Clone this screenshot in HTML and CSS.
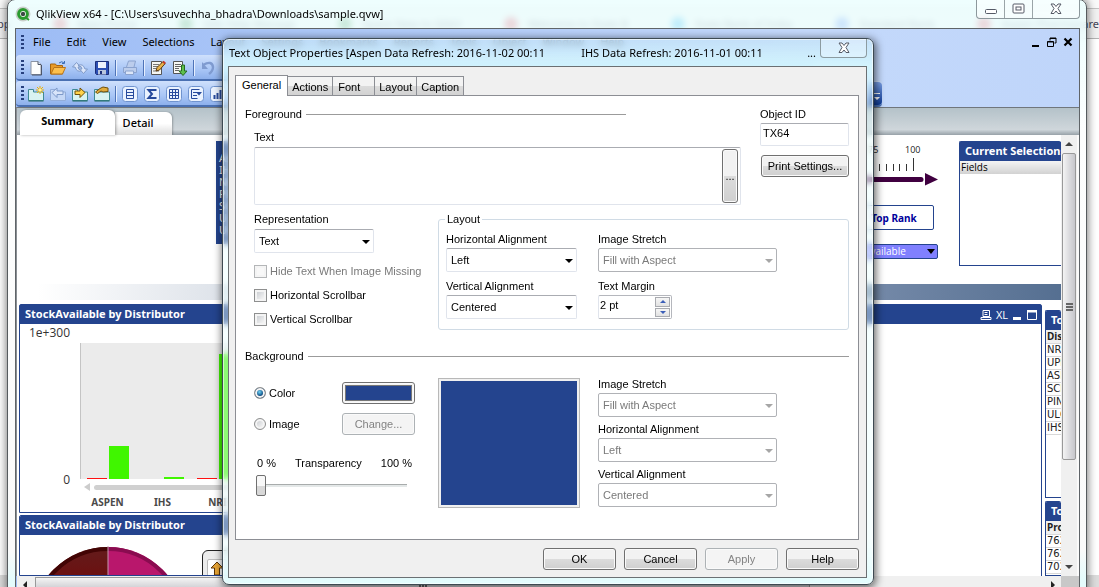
FILE: index.html
```html
<!DOCTYPE html>
<html lang="en">
<head>
<meta charset="utf-8">
<title>QlikView x64</title>
<link rel="stylesheet" href="styles.css">
</head>
<body>
<div class="desktop">
  <div class="browser">
    <div class="browser-top"></div>
    <div class="bookmarks">
      <span class="bm bm-first">pp</span>
      <span class="bm"><i class="dot red"></i>Apps Portal</span>
      <span class="bm"><i class="dot green"></i>Qlik Help Manage</span>
      <span class="bm"><i class="dot green"></i>Space New to QlikV</span>
      <span class="bm"><i class="dot red"></i>Welcome to State B</span>
      <span class="bm"><i class="dot cyan"></i>State Bank of India</span>
      <span class="bm"><i class="dot blue"></i>Standard Bank</span>
      <span class="bm bm-last"><i class="dot red"></i>Aspen Pharmacare</span>
    </div>
    <div class="browser-page"></div>
    <div class="browser-foot"></div>
  </div>

  <main class="window">
    <header class="titlebar">
      <svg class="app-icon" viewBox="0 0 16 16"><circle cx="8" cy="8" r="7.5" fill="#c9cfcb"/><circle cx="8" cy="8" r="4.4" fill="#fff" stroke="#2a9a2e" stroke-width="3"/><circle cx="8" cy="8" r="2.2" fill="#3c4a44"/><path d="M10 11l4 3" stroke="#2a9a2e" stroke-width="2"/></svg>
      <h1 class="title">QlikView x64 - [C:\Users\suvechha_bhadra\Downloads\sample.qvw]</h1>
      <div class="controls">
        <button class="ctl" aria-label="Minimize"><svg width="14" height="12" viewBox="0 0 14 12"><rect x="1.500" y="6.500" width="11" height="4" rx="1" fill="#fff" stroke="#555a66"/></svg></button>
        <button class="ctl" aria-label="Restore"><svg width="13" height="12" viewBox="0 0 13 12"><rect x="1" y="1" width="11" height="9" rx="1" fill="#fff" stroke="#555a66"/><rect x="4" y="4" width="5" height="3" fill="#fff" stroke="#555a66"/></svg></button>
        <button class="ctl ctl-close" aria-label="Close"><svg width="14" height="12" viewBox="0 0 14 12"><path d="M2 1h3l2 2.500L9 1h3L9 5.500 12 10.500H9L7 8 5 10.500H2L5 5.500z" fill="#fff" stroke="#555a66"/></svg></button>
      </div>
    </header>

    <div class="client">
      <nav class="menubar">
        <i class="grip"></i>
        <a href="#">File</a><a href="#">Edit</a><a href="#">View</a><a href="#">Selections</a><a href="#">Layout</a><a href="#">Settings</a><a href="#">Bookmarks</a><a href="#">Reports</a><a href="#">Tools</a><a href="#">Object</a><a href="#">Window</a><a href="#">Help</a>
        <div class="mdi">
          <button aria-label="Minimize document"><svg width="10" height="10" viewBox="0 0 10 10"><path d="M1 8h7v2H1z"/></svg></button>
          <button aria-label="Restore document"><svg width="10" height="10" viewBox="0 0 10 10" fill="none" stroke="#000"><path d="M3 3.500V1h6v5H7.500M3 1.500h6"/><path d="M.5 4.500h6v5h-6zM.5 5h6"/></svg></button>
          <button aria-label="Close document"><svg width="10" height="10" viewBox="0 0 10 10"><path d="M1.500 1.500l7 7M8.500 1.500l-7 7" stroke="#000" stroke-width="2.200"/></svg></button>
        </div>
      </nav>
      <div class="toolbar toolbar-std">
        <i class="grip"></i>
        <button aria-label="New"><svg viewBox="0 0 16 16"><path d="M3 1.500h7l3 3v10H3z" fill="#fdfdfd" stroke="#8b93a3"/><path d="M10 1.500v3h3" fill="#dfe6f2" stroke="#4c5568"/><path d="M13.500 5v10H4" stroke="#4c5568" fill="none"/></svg></button>
        <button aria-label="Open"><svg viewBox="0 0 16 16"><path d="M.5 14V4h5l1 1.500h6V14z" fill="#e89a28" stroke="#a8650c"/><path d="M1 14l3-6.500h11.500L12.500 14z" fill="#fcc04e" stroke="#b8741a"/><path d="M9 3q3-2.500 5 0M14.500 1v2.500H12" fill="none" stroke="#3c6db5"/></svg></button>
        <button aria-label="Reload"><svg viewBox="0 0 16 16" fill="#dbe6fa" stroke="#7f9ac8"><path d="M.5 7L4.500 2.500 8.500 7H6q0 3 4 3.500Q5 13 3 7z"/><path d="M15.500 9l-4 4.500L7.500 9H10q0-3-4-3.500Q11 3 13 9z"/></svg></button>
        <button aria-label="Save"><svg viewBox="0 0 16 16"><path d="M1.500 1.500h13v13h-12l-1-1z" fill="#2c4fb4" stroke="#1c2f78"/><rect x="4" y="2" width="8" height="6" fill="#eef3fd"/><rect x="4" y="10" width="8" height="4.500" fill="#b9c6dd"/><rect x="6" y="11" width="2" height="3" fill="#1c2f78"/></svg></button>
        <i class="sep"></i>
        <button aria-label="Print"><svg viewBox="0 0 16 16" fill="#bccdec" stroke="#8ba3cf"><path d="M4.500 7l2-6h7l-1.500 6"/><path d="M1.500 7.500h13v5h-13z"/><path d="M3.500 11h8v3.500h-8z" fill="#dce6f8"/></svg></button>
        <i class="sep"></i>
        <button aria-label="Edit Script"><svg viewBox="0 0 16 16"><path d="M1.500 1.500h10v13h-10z" fill="#f6f6f2" stroke="#555"/><path d="M3 4.500h6M3 6.500h5M3 8.500h3M3 11h6" stroke="#777"/><path d="M6 11l1-3.500L13 1.500l2.200 2L9.500 10z" fill="#e7b24a" stroke="#5c3a10"/><path d="M13 1.500l2.200 2" stroke="#c43a2a" stroke-width="2"/></svg></button>
        <button aria-label="Export"><svg viewBox="0 0 16 16"><path d="M1.500 1.500h9v12h-9z" fill="#f8f8f4" stroke="#555"/><path d="M3 4.500h6M3 6.500h6M3 8.500h4M3 10.500h4" stroke="#666"/><path d="M9.500 5h3v6H15l-4 4.500L7 11h2.500z" fill="#5fbf4c" stroke="#256b20"/></svg></button>
        <i class="sep"></i>
        <button aria-label="Undo"><svg viewBox="0 0 16 16"><path d="M3 5q9-5 10 2 0 4-4 7" fill="none" stroke="#7f9bd0" stroke-width="2.400"/><path d="M2 2v7h6z" fill="#7f9bd0"/></svg></button>
      </div>
      <div class="toolbar toolbar-sheet">
        <i class="grip"></i>
        <button aria-label="Add Sheet"><svg viewBox="0 0 16 16"><path d="M.5 14.500v-11h5V6h10v8.500z" fill="#d9f3f1" stroke="#3f8a94"/><path d="M.5 15h15" stroke="#256b62"/><path d="M12 0v8M8 4h8M9 1l6 6M15 1L9 7" stroke="#f0b000"/><circle cx="12" cy="4" r="1.500" fill="#fff3a0"/></svg></button>
        <button aria-label="Promote Sheet"><svg viewBox="0 0 16 16"><path d="M.5 14.500v-11h5V6h10v8.500z" fill="#c5d8f6" stroke="#93add9"/><path d="M2 6.500L7 2v3h6v3.500H7v3z" fill="#d8e4f9" stroke="#7d99c9"/></svg></button>
        <button aria-label="Demote Sheet"><svg viewBox="0 0 16 16"><path d="M.5 14.500v-11h5V6h10v8.500z" fill="#d9f3f1" stroke="#3f8a94"/><path d="M.5 15h15" stroke="#256b62"/><path d="M13 6.500L8 2v3H3v3.500h5v3z" fill="#ffd24a" stroke="#70500a"/></svg></button>
        <button aria-label="Sheet Properties"><svg viewBox="0 0 16 16"><path d="M.5 14.500v-11h5V6h10v8.500z" fill="#d9f3f1" stroke="#3f8a94"/><path d="M.5 15h15" stroke="#256b62"/><path d="M1.500 6L6 2.500 9 1l5 1v3.500L9 6 7 5 3.500 7.500z" fill="#e0ab3c" stroke="#70500a"/></svg></button>
        <i class="sep"></i>
        <button aria-label="List Box"><svg class="obj" viewBox="0 0 16 16"><rect class="fr" x=".5" y=".5" width="15" height="15" rx="3"/><path d="M4.500 3.500h7v9h-7zM4.500 6.500h7M4.500 9.500h7"/></svg></button>
        <button aria-label="Statistics Box"><svg class="obj" viewBox="0 0 16 16"><rect class="fr" x=".5" y=".5" width="15" height="15" rx="3"/><path d="M11.500 5V4H4.500L8 8l-3.500 4h7v-1" stroke-width="2"/></svg></button>
        <button aria-label="Table Box"><svg class="obj" viewBox="0 0 16 16"><rect class="fr" x=".5" y=".5" width="15" height="15" rx="3"/><path d="M3.500 3.500h9v9h-9zM3.500 6.500h9M3.500 9.500h9M6.500 3.500v9M9.500 3.500v9"/></svg></button>
        <button aria-label="Multi Box"><svg class="obj" viewBox="0 0 16 16"><rect class="fr" x=".5" y=".5" width="15" height="15" rx="3"/><path d="M3.500 3.500h8M3.500 3.500v9h6M5 6.500h4M5 9.500h4"/><path d="M8 6h6l-3 3.500z" fill="#274a9c" stroke="none"/></svg></button>
        <button aria-label="Chart"><svg class="obj" viewBox="0 0 16 16"><rect class="fr" x=".5" y=".5" width="15" height="15" rx="3"/><path d="M4.500 9v4M7.500 7v6M10.500 4v9" stroke-width="2"/></svg></button>
        <button class="overflow" aria-label="Toolbar options"><svg width="8" height="10" viewBox="0 0 8 10"><path d="M1 1h6v1H1zM1 5h6L4 8z" fill="#fff"/></svg></button>
      </div>

      <div class="sheet-tabs">
        <button class="stab on">Summary</button>
        <button class="stab">Detail</button>
      </div>

      <div class="sheet-row">
        <section class="sheet">
          <div class="top-area">
            <div class="refresh-text">Aspen Data Refresh<br>IHS Data Refresh<br>NR Data Refresh<br>PIN Data Refresh<br>SC Data Refresh<br>UL Data Refresh<br>UP Data Refresh</div>
            <div class="rank-col">
              <svg class="gauge" viewBox="0 0 150 46" width="150" height="46">
                <g stroke="#333"><path d="M19.500 17v13M91.500 23v7M98.500 23v7M105.500 23v7M111.500 23v7M118.500 23v7M125.500 17v13"/></g>
                <path d="M4 38.500h129" stroke="#400040" stroke-width="5" stroke-linecap="round"/>
                <path d="M137 32l13 6.500-13 6z" fill="#400040"/>
                <text x="80" y="12">75</text><text x="117" y="12">100</text>
              </svg>
              <button class="top-rank">Top Rank</button>
              <span class="metric"><select aria-label="Metric"><option>StockAvailable</option></select></span>
            </div>
            <div class="panel selections">
              <h2 class="cap">Current Selections</h2>
              <div class="fields">Fields</div>
            </div>
          </div>
          <div class="strip"></div>
          <div class="lower">
            <div class="col-left">
              <div class="panel chart-panel">
                <h2 class="cap">StockAvailable by Distributor</h2>
                <div class="chart">
                  <div class="yaxis"><span>1e+300</span><span>0</span></div>
                  <div class="plot-col">
                    <div class="plot">
                      <div class="grp"><i class="bar r" style="height:1px"></i><i class="bar g" style="height:33px"></i></div>
                      <div class="grp"><i class="bar r" style="height:0px"></i><i class="bar g" style="height:2px"></i></div>
                      <div class="grp"><i class="bar r" style="height:1px"></i><i class="bar g" style="height:125px"></i></div>
                    </div>
                    <div class="plot-scroll"><i class="tri-left"></i><i class="rail"></i></div>
                    <div class="xlabels"><span>ASPEN</span><span>IHS</span><span>NRI</span></div>
                  </div>
                </div>
              </div>
              <div class="panel pie-panel">
                <h2 class="cap">StockAvailable by Distributor</h2>
                <div class="pie-body">
                  <svg class="pie" viewBox="0 0 156 43" width="156" height="43">
                    <defs><linearGradient id="pl" x2="0" y2="1"><stop offset="0" stop-color="#631c1c"/><stop offset=".4" stop-color="#6c1010"/></linearGradient></defs>
                    <path d="M78 1A77 77 0 0 0 1 78H78z" fill="url(#pl)"/><path d="M78 1A77 77 0 0 1 155 78H78z" fill="#b9176c"/>
                    <path d="M78 3A75 75 0 0 0 3 78" fill="none" stroke="#420404" stroke-width="4"/><path d="M78 3A75 75 0 0 1 153 78" fill="none" stroke="#8a0c50" stroke-width="4"/>
                    <path d="M78 0v43" stroke="#c59ab0"/>
                  </svg>
                  <div class="cycle"><button aria-label="Drill up"><svg width="16" height="16" viewBox="0 0 16 16"><path d="M8 1l6 6h-3.500v7h-5V7H2z" fill="#e9a534" stroke="#5a3508"/></svg></button></div>
                </div>
              </div>
            </div>
            <div class="panel mid-panel">
              <div class="cap cap-tools">
                <svg width="12" height="12" viewBox="0 0 12 12" fill="none" stroke="#fff"><path d="M3 1.500h6.500v6H3zM4.500 3.500h3M4.500 5.500h3M1 8.500h10v2H1z"/></svg>
                <span class="xl">XL</span>
                <svg width="10" height="12" viewBox="0 0 10 12"><path d="M1 8h8v3H1z" fill="#fff"/></svg>
                <svg width="12" height="12" viewBox="0 0 12 12"><path d="M1.500 2v8.500h9V2" fill="none" stroke="#fff"/><path d="M1 1h10v2.500H1z" fill="#fff"/></svg>
              </div>
            </div>
            <div class="col-right">
              <div class="panel tbl-panel">
                <h2 class="cap">Top Distributors</h2>
                <table class="tbl"><tr><th>Distributor</th></tr><tr><td>NRI</td></tr><tr><td>UPD</td></tr><tr><td>ASPEN</td></tr><tr><td>SCM</td></tr><tr><td>PINN</td></tr><tr><td>ULC</td></tr><tr><td>IHS</td></tr></table>
              </div>
              <div class="panel tbl-panel last">
                <h2 class="cap">Top Products</h2>
                <table class="tbl"><tr><th>Product</th></tr><tr><td>7621</td></tr><tr><td>7622</td></tr><tr><td>7021</td></tr><tr><td>9311</td></tr></table>
              </div>
            </div>
          </div>
        </section>
        <div class="vscroll"><i class="tri-up"></i><div class="vthumb"><i></i><i></i><i></i></div><i class="tri-down"></i></div>
      </div>
      <div class="hscroll"><i class="tri-l"></i><div class="hthumb"><i></i><i></i><i></i></div><i class="tri-r"></i><b class="corner"></b></div>
    </div>
  </main>

  <section class="dialog" role="dialog" aria-labelledby="dlg-title">
    <header class="dlg-bar">
      <h2 class="dlg-title" id="dlg-title"><span>Text Object Properties [Aspen Data Refresh: 2016-11-02 00:11</span><span>IHS Data Refresh: 2016-11-01 00:11</span></h2>
      <span class="dlg-more">...</span>
      <button class="dlg-close" aria-label="Close dialog"><svg width="14" height="12" viewBox="0 0 14 12"><path d="M2 1h3l2 2.500L9 1h3L9 5.500 12 10.500H9L7 8 5 10.500H2L5 5.500z" fill="#fff" stroke="#555a66"/></svg></button>
    </header>
    <form class="dlg-body">
      <div class="tabs">
        <button type="button" class="tab on">General</button><button type="button" class="tab">Actions</button><button type="button" class="tab tab-font">Font</button><button type="button" class="tab">Layout</button><button type="button" class="tab">Caption</button>
      </div>
      <div class="page">
        <div class="fore">
          <div class="fore-main">
            <div class="heading heading-short"><span>Foreground</span><i></i></div>
            <label class="lbl indent text-lbl" for="txt">Text</label>
            <div class="textbox">
              <textarea id="txt"></textarea>
              <button type="button" class="btn dots" aria-label="Edit expression">...</button>
            </div>
          </div>
          <div class="fore-side">
            <label class="lbl" for="oid">Object ID</label>
            <input class="field oid" id="oid" type="text" value="TX64">
            <button type="button" class="btn">Print Settings...</button>
          </div>
        </div>

        <div class="rep-row">
          <div class="rep">
            <label class="lbl" for="rep">Representation</label>
            <span class="sel sel-rep"><select id="rep"><option>Text</option></select></span>
            <div class="checks">
              <label class="opt off"><input type="checkbox" disabled>Hide Text When Image Missing</label>
              <label class="opt"><input type="checkbox">Horizontal Scrollbar</label>
              <label class="opt"><input type="checkbox">Vertical Scrollbar</label>
            </div>
          </div>
          <fieldset class="layout">
            <legend>Layout</legend>
            <div class="pair pair-s"><label class="lbl" for="ha">Horizontal Alignment</label><span class="sel"><select id="ha"><option>Left</option></select></span></div>
            <div class="pair pair-l"><label class="lbl" for="is">Image Stretch</label><span class="sel off"><select id="is" disabled><option>Fill with Aspect</option></select></span></div>
            <div class="pair pair-s"><label class="lbl" for="va">Vertical Alignment</label><span class="sel"><select id="va"><option>Centered</option></select></span></div>
            <div class="pair"><label class="lbl" for="tm">Text Margin</label>
              <div class="spin"><input id="tm" type="text" value="2 pt"><div class="spin-btns"><button type="button" class="up" aria-label="Increase"></button><button type="button" class="down" aria-label="Decrease"></button></div></div>
            </div>
          </fieldset>
        </div>

        <div class="heading back-heading"><span>Background</span><i></i></div>
        <div class="back">
          <div class="back-left">
            <div class="back-line"><label class="opt"><input type="radio" name="bg" checked>Color</label><button type="button" class="btn swatch" aria-label="Pick color"><i></i></button></div>
            <div class="back-line"><label class="opt"><input type="radio" name="bg">Image</label><button type="button" class="btn" disabled>Change...</button></div>
            <div class="trans-labels"><span>0 %</span><label for="tr">Transparency</label><span>100 %</span></div>
            <input class="slider" id="tr" type="range" min="0" max="100" value="0">
          </div>
          <div class="preview"><i></i></div>
          <div class="back-right">
            <div class="pair"><label class="lbl" for="bis">Image Stretch</label><span class="sel off"><select id="bis" disabled><option>Fill with Aspect</option></select></span></div>
            <div class="pair"><label class="lbl" for="bha">Horizontal Alignment</label><span class="sel off"><select id="bha" disabled><option>Left</option></select></span></div>
            <div class="pair"><label class="lbl" for="bva">Vertical Alignment</label><span class="sel off"><select id="bva" disabled><option>Centered</option></select></span></div>
          </div>
        </div>
      </div>
      <div class="actions">
        <button type="button" class="btn">OK</button><button type="button" class="btn">Cancel</button><button type="button" class="btn" disabled>Apply</button><button type="button" class="btn">Help</button>
      </div>
    </form>
  </section>
</div>
</body>
</html>
```

FILE: styles.css
```css
* { box-sizing: border-box; }
body { margin: 0; font: 11px/14px "Noto Sans", "Open Sans", sans-serif; color: #000; }
h1, h2 { margin: 0; font-size: inherit; font-weight: normal; }
button { margin: 0; padding: 0; border: 0; background: none; font: inherit; color: inherit; }
a { color: inherit; text-decoration: none; }
i, b { display: block; }
svg { display: block; }

.desktop { position: relative; height: 100vh; overflow: hidden; background: #fff; }

/* browser behind */
.browser { display: flex; flex-direction: column; height: 100%; }
.browser-top { height: 9px; background: #fafafa; border-bottom: 1px solid #c4c4c4; }
.bookmarks { display: flex; align-items: center; justify-content: space-between; height: 30px; background: #f1f1f1; border-bottom: 1px solid #b4b4b4; font-size: 11px; color: #445; white-space: nowrap; }
.bm { display: flex; align-items: center; gap: 10px; }
.bm-first { margin-left: -3px; }
.dot { width: 14px; height: 14px; border-radius: 7px; }
.dot.red { background: #e03a50; } .dot.green { background: #3d8f4a; }
.dot.cyan { background: #12a5e8; } .dot.blue { background: #4d7ff0; }
.browser-page { flex: 1; }
.browser-foot { height: 12px; background: #dcdcdc; }

/* main window */
.window { position: absolute; left: 7px; right: 12px; top: -1px; bottom: -7px; display: flex; flex-direction: column; padding: 0 6px 0 7px; border: 1px solid #565b5e; border-radius: 8px 8px 0 0; background: linear-gradient(rgba(235,255,255,.8), rgba(238,255,255,.8) 40px, #fdfefe 130px, #fafafa 550px, #e4fbfc 580px); backdrop-filter: blur(3px); box-shadow: 0 0 9px 1px rgba(0,0,0,.5); }
.titlebar { display: flex; align-items: flex-start; height: 28px; }
.app-icon { width: 16px; height: 16px; margin-top: 6px; }
.title { flex: 1; margin-left: 5px; line-height: 28px; white-space: nowrap; }
.controls { display: flex; height: 19px; border: 1px solid #8c989c; border-top: 0; border-radius: 0 0 4px 4px; background: rgba(255,255,255,.45); }
.ctl { display: flex; align-items: center; justify-content: center; width: 28px; border-right: 1px solid #9aa5a8; }
.ctl-close { width: 46px; border-right: 0; }
.client { flex: 1; min-height: 0; display: flex; flex-direction: column; border: 1px solid #5f6468; border-bottom: 0; background: linear-gradient(90deg, #9dbcf5, #c4d9fb 75%, #bfd5fa); }
.menubar { display: flex; align-items: center; height: 26px; padding-left: 5px; }
.menubar a { padding: 0 8px; }
.grip { flex: none; width: 3px; height: 15px; background: repeating-linear-gradient(#27407e 0 2px, transparent 2px 4px); }
.menubar .grip { margin-right: 1px; }
.mdi { display: flex; gap: 6px; margin-left: auto; padding-right: 6px; }
.toolbar { display: flex; align-items: center; height: 26px; padding: 1px 0 0 5px; background: linear-gradient(#cfe0fc, #a9c6f6 60%, #8db0ec); border-bottom: 2px solid #4a70b2; border-radius: 4px; }
.toolbar-std { width: 75%; }
.toolbar-sheet { margin-right: 197px; }
.toolbar button { flex: none; width: 22px; padding-left: 3px; }
.toolbar button svg { width: 16px; height: 16px; }
.toolbar .grip { margin-right: 1px; }
.sep { flex: none; width: 1px; height: 16px; margin: 0 3px 0 2px; background: #4f74b8; box-shadow: 1px 0 #e6effe; }
.obj { fill: none; stroke: #274a9c; }
.obj .fr { fill: #eaf2fe; stroke: #6f93cf; }
.toolbar .overflow { display: flex; align-items: flex-end; align-self: stretch; margin-left: auto; width: 14px; padding: 0 0 3px 5px; border-radius: 0 4px 4px 0; background: linear-gradient(#7aa0e6, #0d3a96); }
.toolbar .overflow svg { width: 8px; height: 10px; }

.sheet-tabs { display: flex; align-items: flex-end; height: 28px; padding-left: 3px; border-top: 1px solid #70767c; border-left: 1px solid #8a8f94; background: linear-gradient(#b4c2c9, #cfd6db 80%, #97a1a8); }
.stab { height: 23px; width: 57px; padding: 0 11px 2px 0; border-radius: 0 6px 0 0; background: linear-gradient(#fff 50%, #dcdcdc); text-align: center; font-weight: 500; box-shadow: 1px 0 2px rgba(0,0,0,.25); }
.stab.on { height: 25px; width: 95px; padding: 0 0 4px; border-radius: 6px 6px 0 0; background: #fff; font-weight: bold; box-shadow: 1px 0 3px rgba(0,0,0,.35); z-index: 1; }

.sheet-row { flex: 1; min-height: 0; display: flex; }
.sheet { flex: 1; min-width: 0; display: flex; flex-direction: column; overflow: hidden; border-left: 1px solid #8a8f94; background: #fff; }
.top-area { display: flex; height: 149px; padding: 6px 0 0 199px; }
.refresh-text { width: 240px; height: 103px; padding: 11px 3px; background: #24448e; color: #fff; font-size: 11px; line-height: 12px; }
.rank-col { display: flex; flex-direction: column; align-items: flex-end; width: 150px; margin-left: auto; margin-right: 21px; }
.gauge text { font: 9px "Open Sans", sans-serif; fill: #222; }
.top-rank { width: 76px; height: 25px; margin: 18px 4px 0 0; padding-right: 4px; border: 1px solid #24448e; border-radius: 2px; background: #fff; color: #00009c; font-size: 10px; font-weight: bold; }
.metric { position: relative; width: 100px; height: 15px; margin-top: 14px; }
.metric select { appearance: none; display: block; width: 100%; height: 15px; padding: 0; border: 1px solid #24448e; border-radius: 2px; background: #8080ff; color: #fff; font: 10px/13px "Open Sans", sans-serif; }
.metric::after { content: ""; position: absolute; right: 3px; top: 5px; border: 4px solid transparent; border-top: 5px solid #000; border-bottom: 0; }

.panel { border: 1px solid #24448e; border-radius: 2px 2px 0 0; background: #fff; }
.cap { height: 19px; padding-left: 5px; background: #24448e; color: #fff; font: bold 11px/18px "Noto Sans", sans-serif; white-space: nowrap; overflow: hidden; }
.selections { width: 102px; height: 125px; border-right: 0; }
.fields { height: 13px; padding-left: 1px; background: linear-gradient(#f4f4f4, #d2d2d2); font: 10px/12px "Open Sans", sans-serif; }
.strip { height: 16px; background: linear-gradient(90deg, #fff 2%, #dde2e9 20%, #7489a8 82%, #556f91); }
.lower { flex: 1; min-height: 0; display: flex; padding: 4px 0 0 2px; }
.col-left { display: flex; flex-direction: column; gap: 2px; width: 440px; }
.chart-panel { height: 209px; }
.chart { display: flex; height: 188px; }
.yaxis { display: flex; flex-direction: column; justify-content: space-between; align-items: flex-end; width: 50px; height: 163px; padding-top: 2px; font-family: "Open Sans", sans-serif; font-size: 12px; color: #333; }
.plot-col { flex: 1; margin: 19px 0 0 10px; }
.plot { display: flex; align-items: flex-end; gap: 13px; height: 136px; padding-left: 6px; border-left: 1px solid #c4c4c4; background: #ebebeb; }
.grp { display: flex; align-items: flex-end; gap: 2px; }
.bar { width: 20px; }
.bar.r { background: #f11; } .bar.g { background: #40f600; }
.plot-scroll { display: flex; align-items: center; gap: 4px; height: 16px; padding-left: 4px; }
.tri-left { border: 4px solid transparent; border-right: 6px solid #ccc; border-left: 0; }
.rail { flex: 1; height: 5px; border-radius: 3px; background: #d0d0d0; }
.xlabels { display: flex; font: bold 10px/14px "Noto Sans", sans-serif; color: #4a4a4a; }
.xlabels span { width: 55px; text-align: center; }
.pie-panel { flex: 1; min-height: 0; overflow: hidden; }
.pie-body { display: flex; align-items: flex-start; padding: 11px 0 0 10px; gap: 16px; }
.cycle { width: 90px; height: 60px; margin-top: 4px; padding: 8px 4px; border: 1px solid #222; border-radius: 6px; background: #ececec; }
.cycle button { padding: 1px; background: #fff; border: 1px solid #bbb; border-radius: 2px; }
.mid-panel { flex: 1; margin-bottom: -2px; }
.cap-tools { display: flex; align-items: center; justify-content: flex-end; gap: 4px; padding-right: 3px; }
.xl { font: 11px/18px "Open Sans", sans-serif; }
.col-right { display: flex; flex-direction: column; gap: 3px; width: 16px; margin: 6px 0 0 3px; }
.tbl-panel { height: 188px; overflow: hidden; border-right: 0; }
.tbl-panel.last { flex: 1; height: auto; }
.tbl { width: 100px; border-collapse: collapse; font: 10px "DejaVu Sans", sans-serif; color: #222; }
.tbl th, .tbl td { height: 13px; padding: 0 1px; border-bottom: 1px solid #d8d8d8; line-height: 12px; text-align: left; }
.tbl th { background: #f0f0f0; font-family: "Noto Sans", sans-serif; }

.vscroll { display: flex; flex-direction: column; align-items: center; width: 18px; padding: 7px 1px 7px; border-right: 2px solid #fafafa; background: #f0f0f0; }
.tri-up { border: 4px solid transparent; border-bottom: 4px solid #444; border-top: 0; margin-bottom: 7px; }
.tri-down { border: 4px solid transparent; border-top: 4px solid #444; border-bottom: 0; margin-top: auto; }
.vthumb { display: flex; flex-direction: column; align-items: center; justify-content: center; gap: 1px; width: 100%; height: 72%; border: 1px solid #999; border-radius: 2px; background: linear-gradient(90deg, #f4f4f4, #dcdcdf 50%, #c6c6cb); }
.vthumb i { width: 7px; height: 2px; background: #666; }
.hscroll { display: flex; align-items: center; flex: none; height: 17px; margin-left: 1px; background: #f0f0f0; }
.tri-l { margin: 0 8px 0 6px; border: 4px solid transparent; border-right: 4px solid #222; border-left: 0; }
.tri-r { margin: 0 6px 0 auto; border: 4px solid transparent; border-left: 4px solid #222; border-right: 0; }
.hthumb { display: flex; align-items: center; justify-content: center; gap: 1px; width: 73%; height: 15px; border: 1px solid #999; background: linear-gradient(#f4f4f4, #c6c6cb); }
.hthumb i { width: 2px; height: 7px; background: #666; }
.corner { width: 18px; height: 17px; background: #c8c8c8; }

/* dialog */
.dialog { position: absolute; left: 222px; right: 225px; top: 38px; padding: 0 6px 6px 5px; border: 1px solid #3d4a52; border-radius: 7px; background: linear-gradient(rgba(196,226,248,.75), rgba(215,252,255,.8) 28px, rgba(230,255,255,.45) 60px, rgba(235,255,255,.45) 500px, #e2fcfd); backdrop-filter: blur(3px); box-shadow: inset 0 0 0 1px rgba(255,255,255,.6), 1px 2px 9px 1px rgba(0,0,0,.6); }
.dlg-bar { display: flex; height: 27px; padding-left: 1px; }
.dlg-title { display: flex; gap: 36px; line-height: 27px; white-space: nowrap; }
.dlg-more { margin-left: auto; padding-right: 4px; line-height: 27px; }
.dlg-close { display: flex; align-items: center; justify-content: center; width: 47px; height: 19px; border: 1px solid #8c9ba1; border-top: 0; border-radius: 0 0 4px 4px; background: rgba(255,255,255,.3); }
.dlg-body { margin: 0; padding: 8px 7px 7px 6px; border: 1px solid #6b7073; background: #f0f0f0; font: 11px/14px "Liberation Sans", Arial, sans-serif; }
.tabs { display: flex; align-items: flex-end; }
.tab { height: 19px; padding: 2px 4px 0; border: 1px solid #8c8e94; border-bottom: 0; background: linear-gradient(#f3f3f3 50%, #dcdcdc 50%, #d2d2d2); }
.tab + .tab { margin-left: -1px; }
.tab.on { height: 21px; padding: 0 6px 2px; background: #fff; margin-bottom: -1px; z-index: 1; }
.tab-font { padding: 2px 14px 0 5px; }
.page { padding: 11px 9px 31px; border: 1px solid #8c8e94; background: #fff; }
.lbl { display: block; height: 14px; white-space: nowrap; }
.heading { display: flex; align-items: center; gap: 4px; height: 14px; }
.heading i { flex: 1; height: 1px; background: #9b9b9b; }
.heading-short { padding-right: 115px; }
.fore { display: flex; gap: 19px; }
.fore-main { flex: 1; }
.fore-side { width: 89px; }
.text-lbl { margin: 9px 0 3px; }
.indent { padding-left: 9px; }
.textbox { display: flex; height: 58px; margin-left: 9px; padding: 1px 2px; border: 1px solid #e0e4ec; border-top-color: #aaacb2; border-radius: 2px; }
.textbox textarea { flex: 1; border: 0; outline: 0; resize: none; background: none; font: inherit; }
.btn { height: 22px; border: 1px solid #707070; border-radius: 3px; background: linear-gradient(#f2f2f2 50%, #dcdcdc 50%, #cfcfcf); box-shadow: inset 0 0 0 1px #fafafa; text-align: center; white-space: nowrap; }
.btn:disabled { border-color: #adb2b5; background: #f4f4f4; color: #838383; }
.dots { width: 16px; height: 54px; }
.field { display: block; border: 1px solid #e0e4ec; border-top-color: #aaacb2; border-radius: 2px; background: #fff; font: inherit; }
.oid { width: 100%; height: 23px; margin: 2px 0 9px; padding: 0 2px 4px; }
.fore-side .btn { width: 88px; margin-left: 1px; }

.rep-row { display: flex; margin-top: 7px; }
.rep { width: 193px; padding-left: 9px; }
.sel { position: relative; display: block; margin-top: 2px; }
.sel select { appearance: none; display: block; width: 100%; height: 24px; padding: 0 20px 0 4px; border: 1px solid #e0e4ec; border-top-color: #aaacb2; border-radius: 2px; background: #fff; font: inherit; color: #000; opacity: 1; }
.sel::after { content: ""; position: absolute; right: 4px; top: 11px; border: 4px solid transparent; border-top-color: #000; border-bottom: 0; }
.sel.off select { border-color: #b0b2b6; color: #7a7a7a; }
.sel.off::after { border-top-color: #a6a6a6; }
.sel-rep { width: 120px; margin-top: 3px; }
.checks { display: flex; flex-direction: column; gap: 10px; margin-top: 11px; }
.opt { display: flex; align-items: center; gap: 3px; height: 14px; white-space: nowrap; }
.opt.off { color: #7a7a7a; }
.opt input { appearance: none; flex: none; width: 13px; height: 13px; margin: 0; border: 1px solid #8e8f8f; background: linear-gradient(135deg, #c2c6cb, #f4f4f4 80%); box-shadow: inset 0 0 0 2px #f4f4f4; }
.opt.off input { border-color: #b4b6b8; background: #f8f8f8; }
.opt input[type=radio] { width: 12px; height: 12px; border-radius: 6px; }
.opt input[type=radio]:checked { background: radial-gradient(circle at 45% 40%, #6fd3f5, #0f4f86 45%, #0a2f5a 60%); }
.layout { flex: 1; display: grid; grid-template-columns: 131px 1fr; gap: 7px 21px; margin: 0; padding: 6px 7px 10px; border: 1px solid #d0dbe5; border-radius: 3px; min-width: 0; }
.layout legend { padding: 0 2px; margin-left: -1px; height: 14px; }
.pair-l .sel { width: 179px; }
.spin { display: flex; width: 74px; height: 24px; margin-top: 2px; border: 1px solid #b5b7bd; border-left-color: #e0e4ec; border-radius: 2px; }
.spin input { flex: 1; min-width: 0; border: 0; padding: 0 1px 5px; font: inherit; background: none; }
.spin-btns { display: flex; flex-direction: column; gap: 1px; width: 17px; padding: 1px; }
.spin-btns button { flex: 1; display: flex; align-items: center; justify-content: center; border: 1px solid #a9abb0; background: linear-gradient(#f6f6f6, #e2e2e2); }
.spin-btns button::after { content: ""; border: 3px solid transparent; }
.spin-btns .up::after { border-bottom-color: #3c5fb8; border-top-width: 0; }
.spin-btns .down::after { border-top-color: #3c5fb8; border-bottom-width: 0; }

.back-heading { margin-top: 19px; }
.back { display: flex; margin-top: 14px; }
.back-left { width: 193px; padding: 5px 23px 0 9px; }
.back-line { display: flex; align-items: center; justify-content: space-between; margin-bottom: 9px; }
.back-line .btn { width: 73px; }
.btn.swatch { padding: 2px; background: #f4f4f4; }
.swatch i { height: 16px; background: #24448e; border: 1px solid #777; }
.trans-labels { display: flex; justify-content: space-between; margin-top: 21px; padding: 0 3px; }
.slider { appearance: none; display: block; width: 151px; height: 22px; margin: 4px 0 0 2px; background: none; }
.slider::-webkit-slider-runnable-track { height: 3px; background: #e4e8e8; border-top: 1px solid #a8acac; }
.slider::-webkit-slider-thumb { appearance: none; width: 10px; height: 21px; margin-top: -10px; border: 1px solid #707070; border-radius: 2px; background: linear-gradient(#f8f8f8 50%, #d8d8d8 50%); }
.preview { width: 142px; height: 130px; margin: 1px 0 0; padding: 2px; border: 1px solid #b8b8b8; background: #f0f0f0; }
.preview i { height: 100%; background: #24448e; }
.back-right { width: 179px; margin-left: 18px; display: flex; flex-direction: column; gap: 5px; }
.actions { display: flex; justify-content: flex-end; gap: 8px; margin-top: 8px; }
.actions .btn { width: 73px; }
```
